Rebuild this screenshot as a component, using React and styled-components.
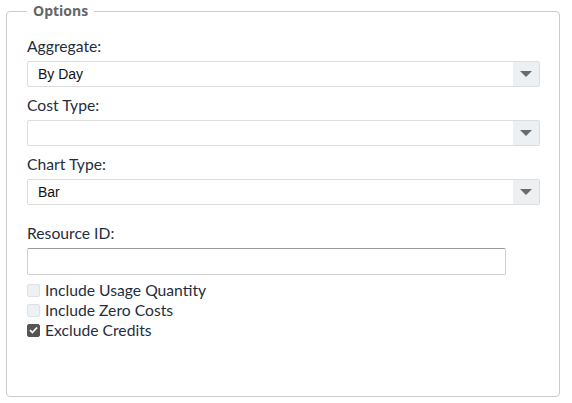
import React from 'react'
import styled, { createGlobalStyle } from 'styled-components'

const GlobalStyle = createGlobalStyle`
    body {
        margin: 0;
        background: #ffffff;
        font-family: Lato, "Liberation Sans", sans-serif;
    }
`

const Pagina = styled.div`
    padding: 1px 12px 0 6px;
    width: 572px;
    box-sizing: border-box;
`

const Caixa = styled.fieldset`
    margin: 0;
    padding: 0 19px 0 20px;
    height: 396px;
    box-sizing: border-box;
    border: 1px solid #cccccc;
    border-radius: 4px;
    display: flex;
    flex-direction: column;
`

const Legenda = styled.legend`
    padding: 0 6px;
    font-family: "Open Sans", "Liberation Sans", sans-serif;
    font-weight: 700;
    font-size: 14px;
    line-height: 20px;
    color: #666666;
`

const Rotulo = styled.label`
    display: block;
    font-size: 15.7px;
    line-height: 18px;
    color: #1f2d3d;
    margin-top: ${p => p.$topo || 9}px;
    margin-bottom: 6px;
`

const Seletor = styled.div`
    display: flex;
    height: 26px;
    box-sizing: border-box;
    border: 1px solid #dddddd;
    border-radius: 2px;
    background: #ffffff;
`

const Valor = styled.div`
    flex: 1;
    padding-left: 10px;
    font-family: "Liberation Sans", Arial, sans-serif;
    font-size: 14px;
    line-height: 24px;
    color: #111111;
`

const Seta = styled.div`
    width: 26px;
    background: #ecf0f2;
    display: flex;
    align-items: center;
    justify-content: center;
    &::after {
        content: '';
        border-left: 6px solid transparent;
        border-right: 6px solid transparent;
        border-top: 6px solid #6a6a6a;
    }
`

const Entrada = styled.div`
    width: 479px;
    height: 27px;
    box-sizing: border-box;
    border: 1px solid #d0d0d0;
    border-top-color: #999999;
    border-radius: 2px;
`

const ListaOpcoes = styled.div`
    margin-top: 5px;
    display: flex;
    flex-direction: column;
`

const Opcao = styled.div`
    display: flex;
    align-items: center;
    height: 20px;
    font-size: 15.7px;
    color: #1f2d3d;
`

const Marca = styled.span`
    width: 13px;
    height: 13px;
    box-sizing: border-box;
    border-radius: 2px;
    margin-right: 5px;
    display: flex;
    align-items: center;
    justify-content: center;
    background: ${p => (p.$marcado ? '#555555' : '#eef1f3')};
    border: 1px solid ${p => (p.$marcado ? '#555555' : '#dde2e6')};
`

function Select({ valor }) {
    return (
        <Seletor>
            <Valor>{valor}</Valor>
            <Seta />
        </Seletor>
    )
}

function Checkbox({ marcado, children }) {
    return (
        <Opcao>
            <Marca $marcado={marcado}>
                {marcado && (
                    <svg width="9" height="8" viewBox="0 0 9 8">
                        <path d="M1 4.2 L3.4 6.5 L8 1.5" fill="none" stroke="#ffffff" strokeWidth="1.8" />
                    </svg>
                )}
            </Marca>
            {children}
        </Opcao>
    )
}

export default function App() {
    return (
        <Pagina>
            <GlobalStyle />
            <Caixa>
                <Legenda>Options</Legenda>
                <Rotulo $topo={16}>Aggregate:</Rotulo>
                <Select valor="By Day" />
                <Rotulo>Cost Type:</Rotulo>
                <Select valor="" />
                <Rotulo>Chart Type:</Rotulo>
                <Select valor="Bar" />
                <Rotulo $topo={19}>Resource ID:</Rotulo>
                <Entrada />
                <ListaOpcoes>
                    <Checkbox>Include Usage Quantity</Checkbox>
                    <Checkbox>Include Zero Costs</Checkbox>
                    <Checkbox marcado>Exclude Credits</Checkbox>
                </ListaOpcoes>
            </Caixa>
        </Pagina>
    )
}
